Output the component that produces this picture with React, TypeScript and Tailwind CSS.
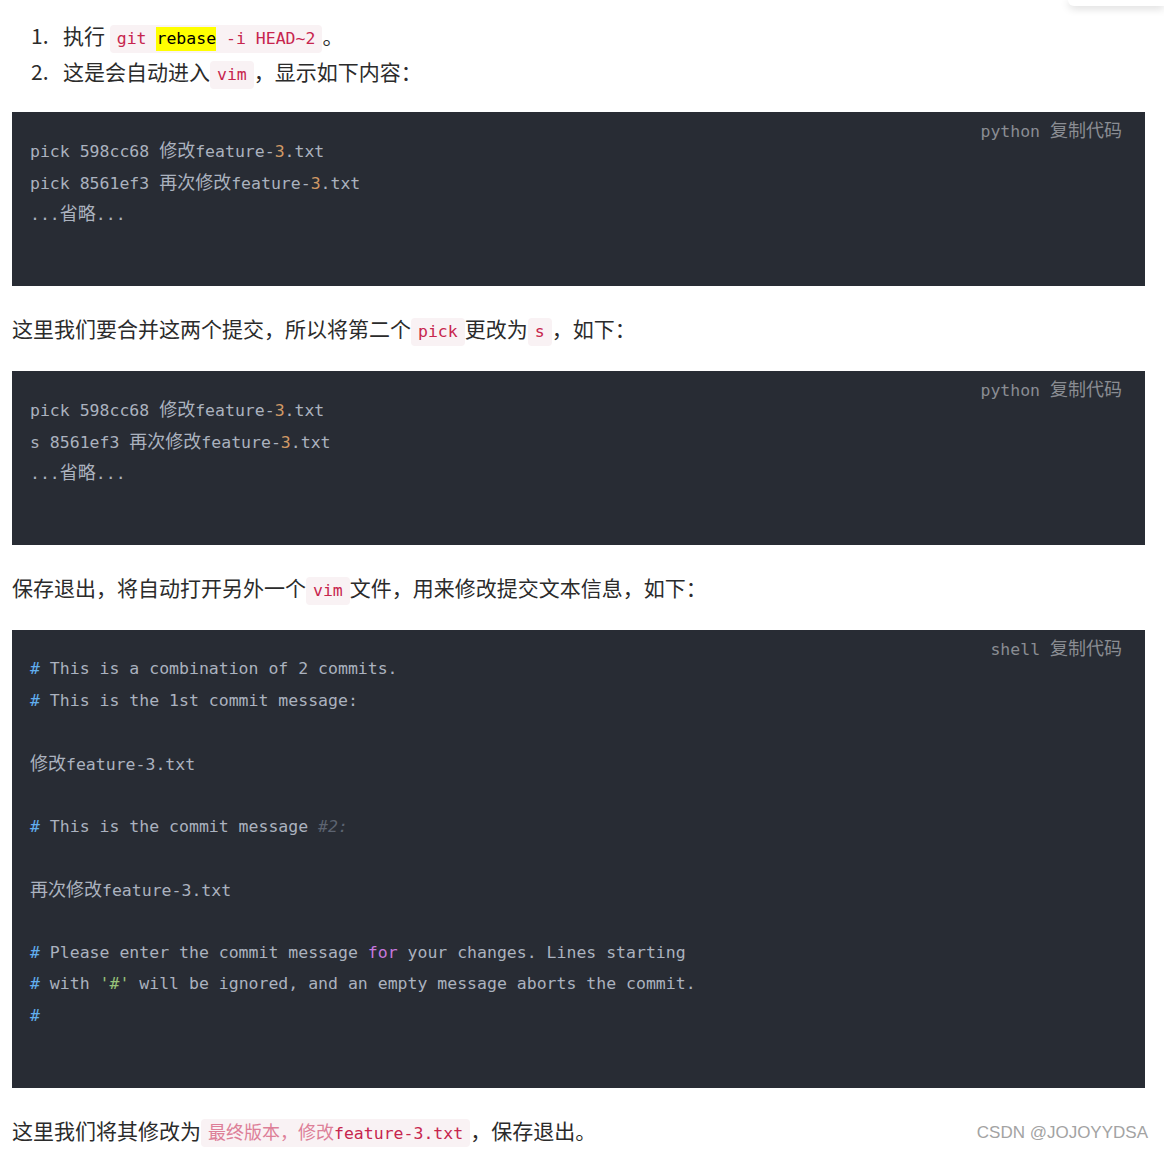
import type { ReactNode } from "react";

const mono = "font-['DejaVu_Sans_Mono','Noto_Sans_CJK_SC',monospace] text-[16.5px]";

// CJK text inside code runs a little larger than the mono glyphs
const Z = ({ children }: { children: ReactNode }) => (
  <span className="text-[18px]">{children}</span>
);
const Num = ({ children }: { children: ReactNode }) => (
  <span className="text-[#d19a66]">{children}</span>
);
const Hash = () => <span className="text-[#61aeee]">#</span>;

const InlineCode = ({ children }: { children: ReactNode }) => (
  <code
    className={`${mono} inline-block h-[28px] leading-[28px] px-[7px] rounded-[4px] bg-[#f9f2f4] text-[#c7254e] align-baseline`}
  >
    {children}
  </code>
);

const CodeBlock = ({ label, lines }: { label: string; lines: ReactNode[] }) => (
  <div className="relative bg-[#282c34] pl-[18px] pr-[23px] pt-[23px] pb-[25px]">
    <div className={`${mono} absolute top-[7px] right-[23px] leading-[24px] text-[#8a8d93]`}>
      {label} <Z>复制代码</Z>
    </div>
    <pre className={`${mono} text-[#abb2bf]`}>
      {lines.map((line, i) => (
        <div key={i} className="h-[31.5px] leading-[31.5px] whitespace-pre">
          {line === "" ? "\u00a0" : line}
        </div>
      ))}
    </pre>
  </div>
);

export default function App() {
  const firstLines: ReactNode[] = [
    <>
      pick 598cc68 <Z>修改</Z>feature-<Num>3</Num>.txt
    </>,
    <>
      pick 8561ef3 <Z>再次修改</Z>feature-<Num>3</Num>.txt
    </>,
    <>
      ...<Z>省略</Z>...
    </>,
    "",
  ];

  const secondLines: ReactNode[] = [
    <>
      pick 598cc68 <Z>修改</Z>feature-<Num>3</Num>.txt
    </>,
    <>
      s 8561ef3 <Z>再次修改</Z>feature-<Num>3</Num>.txt
    </>,
    <>
      ...<Z>省略</Z>...
    </>,
    "",
  ];

  const shellLines: ReactNode[] = [
    <>
      <Hash /> This is a combination of 2 commits.
    </>,
    <>
      <Hash /> This is the 1st commit message:
    </>,
    "",
    <>
      <Z>修改</Z>feature-3.txt
    </>,
    "",
    <>
      <Hash /> This is the commit message{" "}
      <span className="italic text-[#5c6370]">#2:</span>
    </>,
    "",
    <>
      <Z>再次修改</Z>feature-3.txt
    </>,
    "",
    <>
      <Hash /> Please enter the commit message{" "}
      <span className="text-[#c678dd]">for</span> your changes. Lines starting
    </>,
    <>
      <Hash /> with <span className="text-[#98c379]">'#'</span> will be ignored, and an
      empty message aborts the commit.
    </>,
    <>
      <Hash />
    </>,
    "",
  ];

  return (
    <div className="relative min-h-[1151px] overflow-hidden bg-white font-['Noto_Sans_CJK_SC',sans-serif] text-[21px] text-[#2b2b2b]">
      <div className="absolute top-0 right-0 w-[96px] h-[6px] rounded-bl-[6px] bg-white shadow-[0_2px_8px_rgba(0,0,0,0.18)]" />

      <div className="px-[12px] pt-[17px] w-[1157px]">
        <ol className="mb-[23px]">
          <li className="flex items-baseline leading-[36px] pl-[19px]">
            <span className="w-[32px]">1.</span>
            <span>
              执行{" "}
              <InlineCode>
                git{" "}
                <span className="inline-block leading-[24px] bg-[#ffff00] text-black">rebase</span>{" "}
                -i HEAD~2
              </InlineCode>
              。
            </span>
          </li>
          <li className="flex items-baseline leading-[36px] pl-[19px]">
            <span className="w-[32px]">2.</span>
            <span>
              这是会自动进入<InlineCode>vim</InlineCode>，显示如下内容：
            </span>
          </li>
        </ol>

        <CodeBlock label="python" lines={firstLines} />

        <p className="leading-[34px] my-[25px]">
          这里我们要合并这两个提交，所以将第二个<InlineCode>pick</InlineCode>更改为
          <InlineCode>s</InlineCode>，如下：
        </p>

        <CodeBlock label="python" lines={secondLines} />

        <p className="leading-[34px] my-[25px]">
          保存退出，将自动打开另外一个<InlineCode>vim</InlineCode>
          文件，用来修改提交文本信息，如下：
        </p>

        <CodeBlock label="shell" lines={shellLines} />

        <p className="leading-[34px] mt-[25px]">
          这里我们将其修改为
          <InlineCode>
            <span className="text-[18px] text-[#dd7f98]">最终版本，修改</span>feature-3.txt
          </InlineCode>
          ，保存退出。
        </p>
      </div>

      <div className="absolute right-[16px] bottom-[6px] font-['Liberation_Sans',sans-serif] text-[17px] text-[#a3a3a3] [text-shadow:0_0_1px_#ffffff]">
        CSDN @JOJOYYDSA
      </div>
    </div>
  );
}
